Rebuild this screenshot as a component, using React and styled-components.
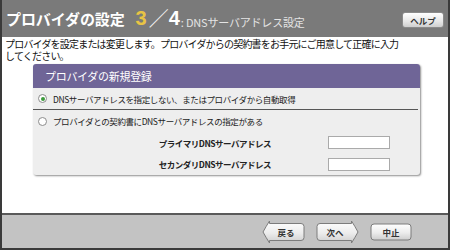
import React from "react";
import styled, { createGlobalStyle } from "styled-components";

const Global = createGlobalStyle`
  html, body { margin: 0; padding: 0; background: #fff; }
  body { font-family: "Noto Sans CJK JP", "Noto Sans", sans-serif; }
  * { box-sizing: border-box; }
`;

const Window = styled.div`
  width: 450px;
  height: 250px;
  border: 2px solid #3a3a3a;
  border-top: 0;
  display: flex;
  flex-direction: column;
  overflow: hidden;
`;

const Header = styled.div`
  height: 37px;
  flex: none;
  background: #7a7a7a;
  display: flex;
  align-items: flex-end;
  padding: 0 4px 8px 4px;
`;

const Title = styled.span`
  font-size: 15px;
  font-weight: 700;
  color: #fff;
  letter-spacing: -0.1px;
  line-height: 18px;
  margin-bottom: 1px;
`;

const Step = styled.span`
  font-family: "Liberation Sans", Arial, sans-serif;
  font-size: 20px;
  font-weight: 700;
  line-height: 22px;
  color: ${(p) => (p.$current ? "#e8c444" : "#fff")};
  margin-left: ${(p) => p.$gap || 0}px;
`;

const Slash = styled.span`
  font-size: 20px;
  line-height: 22px;
  color: #f2f2f2;
  margin-left: 2px;
`;

const Sub = styled.span`
  font-size: 11px;
  line-height: 14px;
  color: #e4e4e4;
  margin-left: 1px;
  letter-spacing: -0.2px;
`;

const HelpButton = styled.button`
  margin-left: auto;
  margin-bottom: 1px;
  width: 42px;
  height: 16px;
  padding: 0;
  border: 1px solid #8a8a8a;
  border-radius: 3px;
  background: linear-gradient(#ffffff, #e6e6e6 60%, #cfcfcf);
  font-family: inherit;
  font-size: 8.5px;
  font-weight: 700;
  color: #333;
  line-height: 14px;
`;

const Body = styled.div`
  flex: 1;
  background: #fff;
  padding: 1px 0 0 2px;
`;

const Desc = styled.p`
  margin: 0;
  width: 399px;
  font-size: 10px;
  letter-spacing: -0.8px;
  line-height: 12px;
  color: #111;
  padding-left: 1px;
`;

const Panel = styled.div`
  margin: 2px 0 0 29px;
  width: 387px;
  background: #eeeeee;
  border-radius: 3px;
  box-shadow: 1px 1px 2px rgba(0, 0, 0, 0.45);
  overflow: hidden;
`;

const PanelHead = styled.div`
  height: 24px;
  background: #6f6597;
  color: #fff;
  font-size: 11px;
  letter-spacing: -0.3px;
  line-height: 24px;
  padding-left: 12px;
`;

const OptionRow = styled.div`
  height: ${(p) => p.$h}px;
  display: flex;
  align-items: center;
  padding-left: 5px;
  margin-right: 2px;
  border-bottom: ${(p) => (p.$divider ? "1px solid #555" : "none")};
  font-size: 8.5px;
  letter-spacing: -0.4px;
  color: #222;
`;

const Radio = styled.span`
  width: 9px;
  height: 9px;
  border-radius: 50%;
  border: 1px solid #8c8c8c;
  background: #fff;
  margin-right: 6px;
  display: flex;
  align-items: center;
  justify-content: center;
  flex: none;
  &::after {
    content: "";
    width: 4px;
    height: 4px;
    border-radius: 50%;
    background: ${(p) => (p.$checked ? "#3c9a3c" : "transparent")};
  }
`;

const FieldRow = styled.div`
  height: ${(p) => p.$h}px;
  display: flex;
  align-items: center;
`;

const FieldLabel = styled.span`
  width: 238px;
  text-align: right;
  font-size: 8.5px;
  font-weight: 700;
  letter-spacing: -0.5px;
  color: #222;
`;

const TextBox = styled.input`
  margin-left: 57px;
  width: 62px;
  height: 13px;
  border: 1px solid #aaa;
  background: #fff;
  padding: 0;
`;

const Footer = styled.div`
  height: 35px;
  flex: none;
  border-top: 2px solid #5a5a5a;
  background: #c3c3c3;
  display: flex;
  align-items: center;
  justify-content: flex-end;
  gap: 11px;
  padding: 0 36px 0 0;
`;

const NavButton = styled.button`
  position: relative;
  width: ${(p) => p.$w}px;
  height: ${(p) => p.$h}px;
  padding: 0;
  border: 0;
  background: transparent;
  font-family: inherit;
  font-size: 8.5px;
  font-weight: 700;
  color: #333;
  display: flex;
  align-items: center;
  justify-content: center;
  & > svg {
    position: absolute;
    inset: 0;
  }
  & > span {
    position: relative;
    margin-left: ${(p) => p.$shift || 0}px;
  }
`;

function ButtonShape({ kind, w, h }) {
  const id = `g-${kind}`;
  let d;
  if (kind === "back") {
    d = `M1 12 Q4 6.5 7.5 1 L7.5 3.5 L${w - 4} 3.5 Q${w - 1} 3.5 ${w - 1} 6.5 L${w - 1} 17.5 Q${w - 1} 20.5 ${w - 4} 20.5 L7.5 20.5 L7.5 23 Q4 17.5 1 12 Z`;
  } else if (kind === "next") {
    d = `M${w - 1} 12 Q${w - 4} 6.5 ${w - 7.5} 1 L${w - 7.5} 3.5 L4 3.5 Q1 3.5 1 6.5 L1 17.5 Q1 20.5 4 20.5 L${w - 7.5} 20.5 L${w - 7.5} 23 Q${w - 4} 17.5 ${w - 1} 12 Z`;
  } else {
    d = `M4 1 L${w - 4} 1 Q${w - 1} 1 ${w - 1} 4 L${w - 1} ${h - 4} Q${w - 1} ${h - 1} ${w - 4} ${h - 1} L4 ${h - 1} Q1 ${h - 1} 1 ${h - 4} L1 4 Q1 1 4 1 Z`;
  }
  return (
    <svg width={w} height={h} viewBox={`0 0 ${w} ${h}`}>
      <defs>
        <linearGradient id={id} x1="0" y1="0" x2="0" y2="1">
          <stop offset="0" stopColor="#ffffff" />
          <stop offset="0.55" stopColor="#ececec" />
          <stop offset="1" stopColor="#cdcdcd" />
        </linearGradient>
      </defs>
      <path d={d} fill={`url(#${id})`} stroke="#7c7c7c" strokeWidth="1" />
    </svg>
  );
}

export default function App() {
  return (
    <>
      <Global />
      <Window>
        <Header>
          <Title>プロバイダの設定</Title>
          <Step $current $gap={11}>3</Step>
          <Slash>／</Slash>
          <Step>4</Step>
          <Sub>: DNSサーバアドレス設定</Sub>
          <HelpButton>ヘルプ</HelpButton>
        </Header>
        <Body>
          <Desc>
            プロバイダを設定または変更します。プロバイダからの契約書をお手元にご用意して正確に入力してください。
          </Desc>
          <Panel>
            <PanelHead>プロバイダの新規登録</PanelHead>
            <OptionRow $h={22} $divider>
              <Radio $checked />
              DNSサーバアドレスを指定しない、またはプロバイダから自動取得
            </OptionRow>
            <OptionRow $h={22}>
              <Radio />
              プロバイダとの契約書にDNSサーバアドレスの指定がある
            </OptionRow>
            <FieldRow $h={21}>
              <FieldLabel>プライマリDNSサーバアドレス</FieldLabel>
              <TextBox />
            </FieldRow>
            <FieldRow $h={22}>
              <FieldLabel>セカンダリDNSサーバアドレス</FieldLabel>
              <TextBox />
            </FieldRow>
          </Panel>
        </Body>
        <Footer>
          <NavButton $w={43} $h={24} $shift={5}>
            <ButtonShape kind="back" w={43} h={24} />
            <span>戻る</span>
          </NavButton>
          <NavButton $w={43} $h={24} $shift={-5}>
            <ButtonShape kind="next" w={43} h={24} />
            <span>次へ</span>
          </NavButton>
          <NavButton $w={42} $h={18}>
            <ButtonShape kind="stop" w={42} h={18} />
            <span>中止</span>
          </NavButton>
        </Footer>
      </Window>
    </>
  );
}
